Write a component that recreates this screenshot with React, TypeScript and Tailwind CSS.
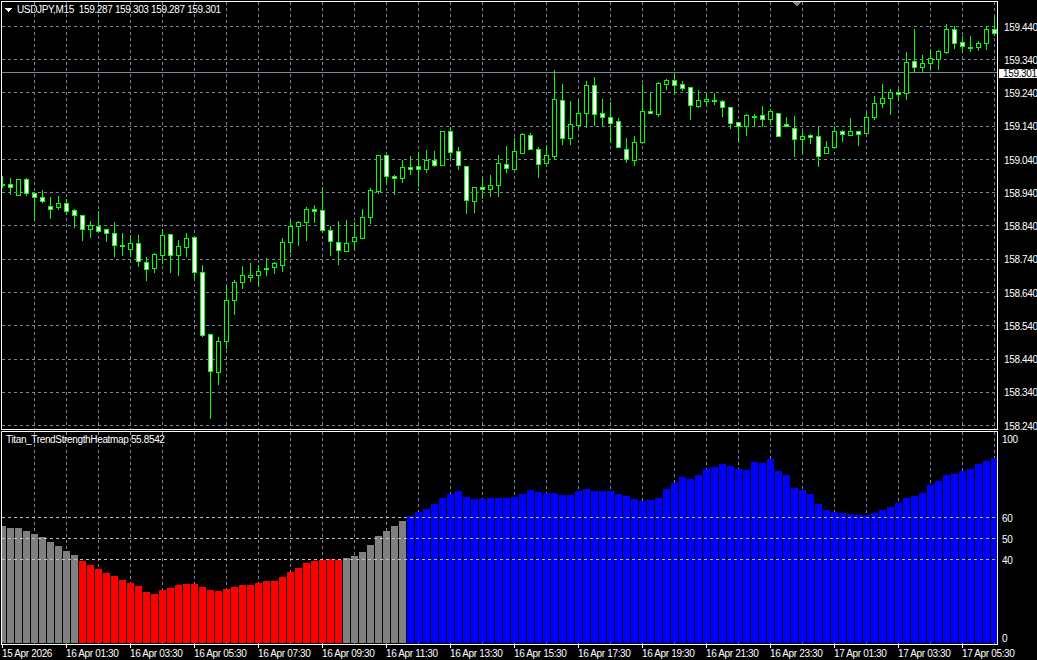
import React from 'react'

// hi, lo, body top, body bottom, filled (bear candle)
const candles: [number, number, number, number, number][] = [
  [176, 187, 184, 185, 0], [178, 194, 184, 187, 1], [179, 195, 179, 195, 0], [178, 195, 179, 193, 1],
  [193, 220, 193, 197, 1], [190, 202, 197, 201, 1], [197, 218, 206, 209, 1], [196, 209, 203, 207, 0],
  [199, 214, 203, 211, 1], [209, 227, 210, 215, 1], [215, 240, 215, 229, 1], [221, 237, 225, 229, 0],
  [211, 232, 226, 231, 1], [229, 241, 229, 233, 1], [222, 256, 233, 245, 1], [233, 255, 245, 246, 1],
  [235, 256, 243, 249, 0], [235, 266, 243, 261, 1], [257, 280, 262, 269, 1], [253, 272, 254, 268, 0],
  [229, 263, 235, 255, 0], [234, 272, 234, 255, 1], [240, 275, 246, 255, 0], [233, 256, 238, 247, 0],
  [237, 280, 237, 272, 1], [265, 336, 272, 335, 1], [334, 418, 334, 371, 1], [337, 384, 341, 372, 0],
  [285, 348, 300, 341, 0], [280, 314, 282, 300, 0], [266, 288, 275, 282, 0], [263, 281, 275, 277, 0],
  [265, 286, 271, 275, 0], [258, 275, 268, 269, 0], [262, 273, 263, 267, 0], [238, 271, 242, 265, 0],
  [220, 252, 226, 242, 0], [221, 245, 222, 226, 0], [207, 240, 209, 222, 0], [205, 222, 209, 211, 1],
  [187, 232, 210, 230, 1], [226, 255, 230, 241, 1], [221, 264, 242, 250, 1], [220, 251, 243, 251, 0],
  [222, 249, 237, 241, 0], [209, 238, 217, 238, 0], [188, 223, 190, 217, 0], [155, 193, 155, 191, 0],
  [155, 184, 155, 176, 1], [175, 194, 176, 178, 1], [160, 182, 167, 178, 0], [156, 174, 167, 169, 1],
  [152, 186, 166, 169, 1], [150, 172, 160, 169, 0], [151, 166, 160, 165, 1], [131, 165, 131, 165, 0],
  [127, 159, 131, 152, 1], [147, 169, 151, 165, 1], [166, 213, 166, 200, 1], [187, 212, 187, 201, 0],
  [178, 198, 187, 189, 1], [175, 196, 185, 189, 0], [155, 196, 163, 185, 0], [146, 172, 164, 168, 1],
  [138, 169, 151, 169, 0], [133, 153, 134, 153, 0], [133, 149, 135, 149, 1], [147, 177, 149, 164, 1],
  [145, 163, 155, 163, 0], [70, 158, 99, 156, 0], [84, 144, 100, 138, 1], [101, 144, 124, 138, 0],
  [101, 127, 113, 125, 0], [81, 127, 85, 113, 0], [77, 125, 85, 114, 1], [99, 126, 113, 117, 1],
  [102, 142, 117, 123, 1], [118, 147, 121, 147, 1], [138, 162, 149, 159, 1], [136, 165, 142, 160, 0],
  [84, 143, 111, 142, 0], [92, 113, 111, 113, 1], [82, 116, 83, 114, 0], [79, 89, 80, 84, 0],
  [73, 94, 80, 85, 1], [81, 90, 84, 88, 1], [87, 119, 87, 105, 1], [90, 107, 100, 106, 0],
  [93, 105, 99, 101, 0], [93, 104, 100, 101, 0], [100, 116, 101, 107, 1], [107, 128, 107, 123, 1],
  [122, 141, 122, 126, 1], [114, 135, 115, 126, 0], [114, 126, 116, 117, 0], [106, 126, 115, 119, 1],
  [109, 124, 111, 119, 0], [113, 136, 113, 136, 1], [117, 126, 124, 126, 1], [116, 156, 128, 139, 1],
  [131, 153, 136, 139, 0], [134, 143, 135, 137, 1], [127, 166, 136, 156, 1], [141, 153, 147, 153, 0],
  [126, 147, 131, 147, 0], [130, 141, 131, 134, 1], [118, 135, 131, 135, 0], [131, 145, 131, 134, 1],
  [113, 133, 117, 133, 0], [96, 119, 103, 117, 0], [84, 107, 98, 103, 0], [89, 114, 92, 98, 0],
  [89, 100, 92, 94, 1], [52, 99, 62, 93, 0], [29, 72, 61, 67, 1], [55, 72, 63, 67, 0],
  [49, 69, 58, 63, 0], [50, 69, 51, 59, 0], [24, 53, 29, 52, 0], [26, 48, 29, 43, 1],
  [36, 52, 42, 46, 1], [36, 51, 47, 48, 0], [41, 50, 43, 47, 0], [26, 49, 29, 43, 0],
  [17, 35, 29, 33, 1],
]

const barTops = [
  526, 528, 528, 531, 534, 537, 542, 546, 551, 555,
  561, 565, 569, 573, 576, 580, 583, 586, 592, 594, 590, 588, 585, 584, 584, 587, 590, 591, 589, 587, 585, 585, 583, 581, 581, 577, 572, 568, 563, 561, 560, 559, 560,
  558, 556, 552, 545, 536, 531, 526, 521,
  516, 512, 509, 504, 498, 494, 491, 497, 499, 499, 498, 498, 498, 497, 494, 490, 492, 493, 493, 495, 495, 491, 489, 491, 491, 491, 494, 496, 499, 501, 500, 498, 489, 483, 477, 479,
  475, 469, 467, 464, 466, 469, 470, 462, 463, 459, 471, 475, 488, 490, 494, 504, 510, 512, 513, 514, 515, 515, 513, 510, 507, 503, 498, 496, 493, 485, 481, 475, 474, 471, 469, 464, 461, 458,
]

const priceLevels = [
  { y: 26, label: '159.440' }, { y: 59, label: '159.340' }, { y: 92, label: '159.240' }, { y: 126, label: '159.140' },
  { y: 159, label: '159.040' }, { y: 192, label: '158.940' }, { y: 225, label: '158.840' }, { y: 259, label: '158.740' },
  { y: 292, label: '158.640' }, { y: 325, label: '158.540' }, { y: 359, label: '158.440' }, { y: 392, label: '158.340' },
  { y: 425, label: '158.240' },
]

const timeLabels = [
  '15 Apr 2026', '16 Apr 01:30', '16 Apr 03:30', '16 Apr 05:30', '16 Apr 07:30', '16 Apr 09:30', '16 Apr 11:30', '16 Apr 13:30',
  '16 Apr 15:30', '16 Apr 17:30', '16 Apr 19:30', '16 Apr 21:30', '16 Apr 23:30', '17 Apr 01:30', '17 Apr 03:30', '17 Apr 05:30',
]

const GRID = '#778899'
const vLines = Array.from({ length: 31 }, (_, i) => 34 + i * 32)

function barColor(i: number) {
  if (i < 10) return '#808080'
  if (i < 43) return '#ff0000'
  if (i < 51) return '#808080'
  return '#0000ff'
}

function PriceChart() {
  return (
    <svg width={995} height={427} viewBox="2 2 995 427" shapeRendering="crispEdges" className="block">
      {vLines.map(x => (
        <line key={x} x1={x + 0.5} x2={x + 0.5} y1={2} y2={429} stroke={GRID} strokeDasharray="3 3" />
      ))}
      {priceLevels.map(p => (
        <line key={p.y} x1={2} x2={997} y1={p.y + 0.5} y2={p.y + 0.5} stroke={GRID} strokeDasharray="3 3" />
      ))}
      <line x1={2} x2={997} y1={72.5} y2={72.5} stroke={GRID} />
      {candles.map(([hi, lo, top, bot, filled], i) => {
        const c = 2 + i * 8
        return (
          <g key={i}>
            <line x1={c + 0.5} x2={c + 0.5} y1={hi} y2={lo + 1} stroke="#00ff00" />
            <rect x={c - 1.5} y={top + 0.5} width={4} height={bot - top} fill={filled ? '#ffffff' : '#000000'} stroke="#00ff00" />
          </g>
        )
      })}
      <polygon points="5,8 12,8 8.5,12" fill="#ffffff" />
      <polygon points="792,2 801,2 796.5,6.5" fill="#808080" />
    </svg>
  )
}

function HeatmapChart() {
  return (
    <svg width={995} height={212} viewBox="2 432 995 212" shapeRendering="crispEdges" className="block">
      {vLines.map(x => (
        <line key={x} x1={x + 0.5} x2={x + 0.5} y1={432} y2={644} stroke={GRID} strokeDasharray="3 3" />
      ))}
      {barTops.map((top, i) => {
        const c = 2 + i * 8
        return <rect key={i} x={c - 3} y={top} width={7} height={643 - top} fill={barColor(i)} />
      })}
      {[517, 538, 559].map(y => (
        <line key={y} x1={2} x2={997} y1={y + 0.5} y2={y + 0.5} stroke="#c0c0c0" strokeDasharray="3 3" />
      ))}
    </svg>
  )
}

export default function App() {
  return (
    <div className="relative w-[1037px] h-[660px] overflow-hidden bg-black pt-px text-[10px] leading-3 text-white tracking-[-0.35px] font-['Liberation_Sans',sans-serif]">
      {/* main pane */}
      <div className="flex h-[429px] pl-px">
        <div className="relative w-[997px] border border-white">
          <PriceChart />
          <div className="absolute left-[15px] top-[2px] whitespace-pre">USDJPY,M15  159.287 159.303 159.287 159.301</div>
        </div>
        <div className="relative flex-1 pt-[10px] pl-[6px]">
          {priceLevels.map(p => (
            <div key={p.y} className="flex h-[33.25px] items-center">{p.label}</div>
          ))}
          <div className="absolute left-[1px] top-[68px] h-[9px] w-[39px] bg-white pl-[4px] leading-[10px] text-black">159.301</div>
        </div>
      </div>

      {/* indicator pane */}
      <div className="mt-px flex h-[214px] pl-px">
        <div className="relative w-[997px] border border-white">
          <HeatmapChart />
          <div className="absolute left-[4px] top-[2px] whitespace-pre">Titan_TrendStrengthHeatmap 55.8542</div>
        </div>
        <div className="flex flex-1 flex-col pl-[4px] pt-[3px]">
          <div className="h-3">100</div>
          <div className="mt-[67px] h-3">60</div>
          <div className="mt-[9px] h-3">50</div>
          <div className="mt-[9px] h-3">40</div>
          <div className="mt-[66px] h-3">0</div>
        </div>
      </div>

      {/* time axis */}
      <div className="flex pl-[2px]">
        {timeLabels.map(t => (
          <div key={t} className="w-[64px] shrink-0">
            <div className="h-[3px] w-px bg-white" />
            <div className="whitespace-pre">{t}</div>
          </div>
        ))}
      </div>
    </div>
  )
}
